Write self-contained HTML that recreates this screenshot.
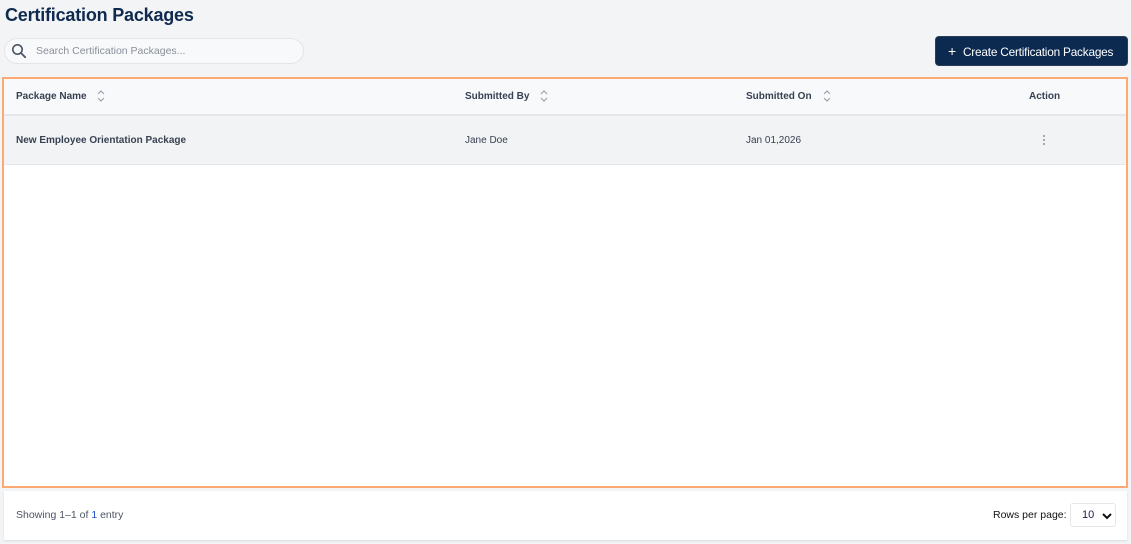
<!DOCTYPE html>
<html><head><meta charset="utf-8"><style>
*{box-sizing:border-box;margin:0;padding:0}
body{width:1131px;height:544px;background:#f3f4f6;font-family:"Liberation Sans",sans-serif;position:relative;overflow:hidden;color:#1f2937}
.abs{position:absolute;white-space:nowrap}
h1{position:absolute;left:5px;top:5px;font-size:18px;font-weight:bold;color:#0f2a4f;letter-spacing:-0.2px}
.search{left:4px;top:38px;width:300px;height:26px;border:1px solid #e3e5e9;border-radius:13px;background:#f8f9fb}
.search span{position:absolute;left:31px;top:6px;font-size:10.5px;color:#8a8f99}
.btn{left:935px;top:36px;width:193px;height:30px;background:#0c2a50;border-radius:4px;color:#fff;font-size:11.8px;line-height:28px;padding-left:12px;border:1px solid #2a3d5a;letter-spacing:-0.2px}
.table{left:2px;top:77px;width:1126px;height:411px;border:2px solid #fca974;background:#fff}
.hdr{left:0;top:0;width:1122px;height:37px;background:#f8f9fb;border-bottom:2px solid #e5e7eb}
.row{left:0;top:37px;width:1122px;height:49px;background:#f2f3f5;border-bottom:1px solid #e5e7eb}
.th{font-size:10px;font-weight:bold;color:#374151;top:12px}
.td{font-size:10px;color:#374151;top:19px}
.foot{left:4px;top:491px;width:1123px;height:49px;background:#fff;box-shadow:0 1px 2px rgba(0,0,0,.1)}
</style></head><body>
<h1>Certification Packages</h1>
<div class="abs search">
<svg class="abs" style="left:6px;top:4px" width="16" height="16" viewBox="0 0 16 16"><circle cx="6.5" cy="6.5" r="4.7" fill="none" stroke="#4b5563" stroke-width="1.6"/><path d="M10 10l4.2 4.2" stroke="#4b5563" stroke-width="1.8" stroke-linecap="round"/></svg>
<span>Search Certification Packages...</span></div>
<div class="abs btn"><span style="font-size:14px;margin-right:7px">+</span>Create Certification Packages</div>
<div class="abs table">
<div class="abs hdr">
<div class="abs th" style="left:12px">Package Name</div>
<div class="abs th" style="left:461px">Submitted By</div>
<div class="abs th" style="left:742px">Submitted On</div>
<div class="abs th" style="left:1025px">Action</div>
<svg class="abs" style="left:92px;top:9px" width="10" height="16" viewBox="0 0 10 16"><path d="M2 6l3-3 3 3M2 10l3 3 3-3" fill="none" stroke="#9ca3af" stroke-width="1.2"/></svg>
<svg class="abs" style="left:535px;top:9px" width="10" height="16" viewBox="0 0 10 16"><path d="M2 6l3-3 3 3M2 10l3 3 3-3" fill="none" stroke="#9ca3af" stroke-width="1.2"/></svg>
<svg class="abs" style="left:818px;top:9px" width="10" height="16" viewBox="0 0 10 16"><path d="M2 6l3-3 3 3M2 10l3 3 3-3" fill="none" stroke="#9ca3af" stroke-width="1.2"/></svg>
</div>
<div class="abs row">
<div class="abs td" style="left:12px;font-weight:bold">New Employee Orientation Package</div>
<div class="abs td" style="left:461px">Jane Doe</div>
<div class="abs td" style="left:742px">Jan 01,2026</div>
<svg class="abs" style="left:1038px;top:18px" width="4" height="12"><circle cx="2" cy="2" r="0.9" fill="#6b7280"/><circle cx="2" cy="6" r="0.9" fill="#6b7280"/><circle cx="2" cy="10" r="0.9" fill="#6b7280"/></svg>
</div>
</div>
<div class="abs foot">
<div class="abs" style="left:12px;top:18px;font-size:10.5px;color:#4b5563">Showing 1–1 of <span style="color:#1d4ed8">1</span> entry</div>
<div class="abs" style="left:989px;top:18px;font-size:10.5px;color:#111">Rows per page:</div>
<div class="abs" style="left:1066px;top:12px;width:46px;height:24px;border:1px solid #e5e7eb;border-radius:3px;font-size:11px;line-height:22px;padding-left:11px;color:#1e1b4b">10
<svg class="abs" style="left:31px;top:8px" width="10" height="8"><path d="M1 2l4 4 4-4" fill="none" stroke="#111" stroke-width="2"/></svg></div>
</div>
</body></html>
